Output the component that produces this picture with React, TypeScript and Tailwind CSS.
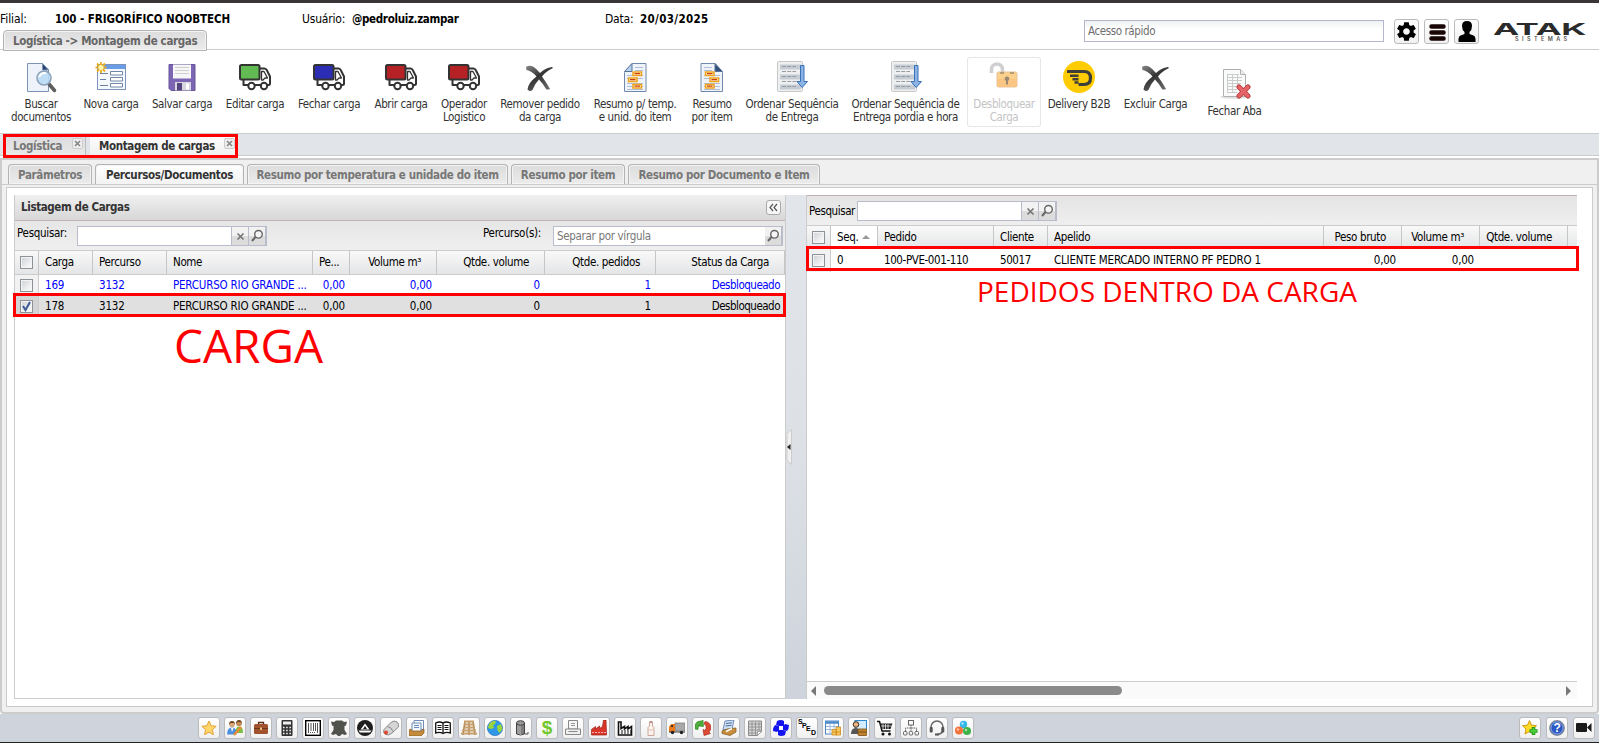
import React from "react";
import { IoMdSettings } from "react-icons/io";

type P = { children?: React.ReactNode };

const Big = ({ children }: P) => (
  <svg width="32" height="32" viewBox="0 0 32 32" className="block shrink-0">
    {children}
  </svg>
);
const Sm = ({ children }: P) => (
  <svg width="16" height="16" viewBox="0 0 16 16" className="block shrink-0">
    {children}
  </svg>
);

const Truck = ({ color }: { color: string }) => (
  <Big>
    <g stroke="#333" strokeWidth="2" strokeLinejoin="round" strokeLinecap="round">
      <path d="M21 7.500h4.500q1.500 0 2.500 2l3 6v7q0 1.500-1.500 1.500H28M22 24h-6M9 24H4.500V19" fill="#fff" />
      <rect x="1" y="4" width="19.500" height="14.500" rx="1.500" fill={color} />
      <path d="M22.500 10.500h2.500l3.500 6.500h-2.500l-2 2h-1.500z" fill="#fff" strokeWidth="1.300" />
      <circle cx="12.500" cy="25" r="3.200" fill="#fff" />
      <circle cx="25" cy="25" r="3.200" fill="#fff" />
    </g>
  </Big>
);
const Cross = () => (
  <Big>
    <defs>
      <linearGradient id="crossInk" x1="0" y1="0" x2="0.600" y2="1">
        <stop offset="0" stopColor="#888" />
        <stop offset="0.500" stopColor="#333" />
        <stop offset="1" stopColor="#666" />
      </linearGradient>
    </defs>
    <path
      d="M2 6Q5 4 9 5.500Q13 8 16 12Q21 7 28 6L29 7Q22 10 18 15.500Q22 21 26 28Q23 29 22 28Q18.500 22 15 18.500Q10.500 23 8.500 29Q5.500 31 3.500 28.500Q4 22 12.500 15.500Q8 10 2.500 9z"
      fill="url(#crossInk)"
    />
  </Big>
);
const Report = ({ flip }: { flip?: boolean }) => (
  <Big>
    <g transform={flip ? "translate(32 0) scale(-1 1)" : undefined}>
      <path d="M5.500 11.500L13 2.500h14v28H5.500z" fill="#eff4fb" stroke="#7089ad" />
      <path d="M5.500 10.500H13v-8z" fill={flip ? "#33517c" : "#b4d1f0"} stroke="#5a7396" />
      <path d="M16 6.500h8M16 9.500h8M8 14.500h16M8 17.500h16M8 22.500h16M8 25.500h16M8 28.500h16" stroke="#b3bed6" />
      <g fill="#fff8dd" stroke="#f0a21a" strokeWidth="1.500">
        <rect x="14" y="11" width="8.500" height="3.500" />
        <rect x="9.500" y="17" width="8.500" height="3.500" />
        <rect x="14" y="23.500" width="8.500" height="3.500" />
      </g>
      <path d="M15.500 12.700h5.500M11 18.700h5.500M15.500 25.200h5.500" stroke="#cc3d12" strokeWidth="1.300" />
    </g>
  </Big>
);
const Order = () => (
  <Big>
    <rect x="1.500" y=".5" width="25" height="30" rx="1" fill="#eeeff0" stroke="#c8c8c8" />
    <path d="M4 6h21M4 16h21M4 26h21" stroke="#c6ccd4" strokeWidth="5" />
    <path d="M6 5.500h14M6 10.500h14M6 15.500h14M6 20.500h14M6 25.500h14" stroke="#989ca3" strokeDasharray="4 1.200" />
    <path d="M24.500 4.500h3.500v16h3.500l-5.300 6-5.300-6h3.600z" fill="#8bb4e4" stroke="#3a70b5" />
  </Big>
);

const tools: { w: string; label: string[]; icon: React.ReactNode; disabled?: boolean; low?: boolean }[] = [
  {
    w: "w-[74px]",
    label: ["Buscar", "documentos"],
    icon: (
      <Big>
        <path d="M2.500 2.500h15l6 6.500v21.500h-21z" fill="#eef3fb" stroke="#7d93b5" />
        <path d="M17.500 2.500v6.500h6z" fill="#26436e" stroke="#7d93b5" />
        <path d="M24 23l5.500 6.500" stroke="#5d5d5d" strokeWidth="3.500" strokeLinecap="round" />
        <circle cx="19" cy="17" r="7" fill="#b9dcf5" fillOpacity="0.900" stroke="#8aa0b8" strokeWidth="1.500" />
        <path d="M14 16q2-4.500 7-4" stroke="#fff" strokeWidth="2" fill="none" />
      </Big>
    ),
  },
  {
    w: "w-[66px]",
    label: ["Nova carga"],
    icon: (
      <Big>
        <rect x="2.500" y="3.500" width="28" height="25" fill="#f5f8fc" stroke="#7b93bb" />
        <rect x="3" y="4" width="27" height="4" fill="#6a9de8" />
        <path d="M5 12.500h8M5 18.500h6M5 24.500h8" stroke="#6c809f" />
        <path d="M15.500 10.500h12v3.500h-12zM15.500 16.500h12v3.500h-12zM15.500 22.500h12v3.500h-12z" fill="#fff" stroke="#7387a8" />
        <path d="M6 1v11M.5 6.500h11M2 2.500l8 8M10 2.500l-8 8" stroke="#e8ae20" strokeWidth="1.800" />
        <circle cx="6" cy="6.500" r="2.500" fill="#fff7b0" />
      </Big>
    ),
  },
  {
    w: "w-[76px]",
    label: ["Salvar carga"],
    icon: (
      <Big>
        <path d="M3 3.500h26v26H5l-2-2z" fill="#7c66b4" stroke="#65539a" />
        <rect x="7" y="3.500" width="18" height="14" fill="#f6f6f6" />
        <path d="M9 6.500h14M9 9.500h14M9 12.500h14" stroke="#cfcfcf" />
        <rect x="9" y="21" width="16" height="8.500" fill="#d7d5de" />
        <rect x="11" y="22" width="5" height="7.500" fill="#55447f" />
        <rect x="20" y="22.500" width="3" height="6" fill="#fff" />
      </Big>
    ),
  },
  { w: "w-[70px]", label: ["Editar carga"], icon: <Truck color="#62bb52" /> },
  { w: "w-[78px]", label: ["Fechar carga"], icon: <Truck color="#2b2eb4" /> },
  { w: "w-[66px]", label: ["Abrir carga"], icon: <Truck color="#b52124" /> },
  { w: "w-[60px]", label: ["Operador", "Logistico"], icon: <Truck color="#b52124" /> },
  { w: "w-[92px]", label: ["Remover pedido", "da carga"], icon: <Cross /> },
  { w: "w-[98px]", label: ["Resumo p/ temp.", "e unid. do item"], icon: <Report /> },
  { w: "w-[56px]", label: ["Resumo", "por item"], icon: <Report flip /> },
  { w: "w-[104px]", label: ["Ordenar Sequência", "de Entrega"], icon: <Order /> },
  { w: "w-[123px]", label: ["Ordenar Sequência de", "Entrega pordia e hora"], icon: <Order /> },
  {
    w: "w-[74px]",
    label: ["Desbloquear", "Carga"],
    disabled: true,
    icon: (
      <Big>
        <path d="M3.500 12V8.500a5.500 5.500 0 0 1 11 0V12" fill="none" stroke="#d0d0d0" strokeWidth="3.500" />
        <rect x="9" y="11" width="20" height="15" rx="1.500" fill="#fbd08b" stroke="#e6c39a" />
        <rect x="9" y="18" width="20" height="8" fill="#fbc080" opacity="0.600" />
        <path d="M19 15.500a2.300 2.300 0 0 1 1 4.400v3.600h-2v-3.600a2.300 2.300 0 0 1 1-4.400z" fill="#9c8973" />
        <path d="M12 12h4M22 12h4" stroke="#a68d6c" strokeWidth="1.500" />
      </Big>
    ),
  },
  {
    w: "w-[76px]",
    label: ["Delivery B2B"],
    icon: (
      <Big>
        <circle cx="16" cy="16" r="16" fill="#ffcc03" />
        <path d="M4 10.500h17q6.500 0 6.500 6.500t-6.500 6.500h-5.500" fill="none" stroke="#3d3d3b" strokeWidth="3.200" />
        <path d="M7 14.800h8.500M9.500 18.300h6M11.500 21.500h4" stroke="#3d3d3b" strokeWidth="2.400" />
      </Big>
    ),
  },
  { w: "w-[77px]", label: ["Excluir Carga"], icon: <Cross /> },
  {
    w: "w-[81px]",
    label: ["Fechar Aba"],
    low: true,
    icon: (
      <Big>
        <ellipse cx="15" cy="29" rx="14" ry="1.800" fill="#e2e2e2" />
        <path d="M4.500 1.500h17l5 5v22h-22z" fill="#fafafa" stroke="#b0b0b0" />
        <path d="M21.500 1.500v5h5" fill="#eee" stroke="#b0b0b0" />
        <path d="M8 6.500h12M8 9.500h15M8 12.500h15M8 15.500h14M8 18.500h12M8 21.500h10M8 24.500h10M8.500 6v19M13.500 6v19M18.500 6v13" stroke="#c9cdc9" />
        <path d="M20 19l9 9M29 19l-9 9" stroke="#b9383c" strokeWidth="5" strokeLinecap="round" />
        <path d="M20 19l9 9M29 19l-9 9" stroke="#e46467" strokeWidth="3.200" strokeLinecap="round" />
      </Big>
    ),
  },
];

const innerTabs = [
  { w: "w-[84px]", t: "Parâmetros" },
  { w: "w-[149px]", t: "Percursos/Documentos", on: true },
  { w: "w-[261px]", t: "Resumo por temperatura e unidade do item" },
  { w: "w-[114px]", t: "Resumo por item" },
  { w: "w-[192px]", t: "Resumo por Documento e Item" },
];

const Check = ({ on }: { on?: boolean }) => (
  <span className="flex size-[13px] items-center justify-center border border-[#8c9297] bg-linear-to-br from-[#cdd1d5] to-white shadow-[inset_0_0_0_1px_#f4f4f4]">
    {on && (
      <svg width="11" height="11" viewBox="0 0 11 11">
        <path d="M2 5l2.500 4L9 1" fill="none" stroke="#3c5a96" strokeWidth="2" />
      </svg>
    )}
  </span>
);
const Lens = () => (
  <svg width="14" height="14" viewBox="0 0 14 14">
    <circle cx="8.500" cy="5.300" r="3.800" fill="#f4f4f4" stroke="#666" strokeWidth="1.400" />
    <path d="M5.500 8L2 12" stroke="#666" strokeWidth="2" />
  </svg>
);
const ClearX = () => (
  <svg width="9" height="9" viewBox="0 0 9 9">
    <path d="M1.500 1.500l6 6M7.500 1.500l-6 6" stroke="#777" strokeWidth="1.700" />
  </svg>
);
const Trigger = ({ children }: P) => (
  <span className="flex h-full w-[17px] items-center justify-center border-r border-[#b9bccb] bg-linear-to-b from-[#f2f2f2] from-50% to-[#dcdcdc] to-50%">
    {children}
  </span>
);

type Col = { w: string; h: string; right?: boolean; sort?: boolean };
const leftCols: Col[] = [
  { w: "w-[54px]", h: "Carga" },
  { w: "w-[74px]", h: "Percurso" },
  { w: "w-[146px]", h: "Nome" },
  { w: "w-[37px]", h: "Pe..." },
  { w: "w-[87px]", h: "Volume m³", right: true },
  { w: "w-[108px]", h: "Qtde. volume", right: true },
  { w: "w-[111px]", h: "Qtde. pedidos", right: true },
  { w: "w-[129px]", h: "Status da Carga", right: true },
];
const leftRows = [
  ["169", "3132", "PERCURSO RIO GRANDE ...", "0,00", "0,00", "0", "1", "Desbloqueado"],
  ["178", "3132", "PERCURSO RIO GRANDE ...", "0,00", "0,00", "0", "1", "Desbloqueado"],
];
const rightCols: Col[] = [
  { w: "w-[47px]", h: "Seq.", sort: true },
  { w: "w-[116px]", h: "Pedido" },
  { w: "w-[54px]", h: "Cliente" },
  { w: "w-[276px]", h: "Apelido" },
  { w: "w-[78px]", h: "Peso bruto", right: true },
  { w: "w-[78px]", h: "Volume m³", right: true },
  { w: "w-[88px]", h: "Qtde. volume", right: true },
];
const rightRow = ["0", "100-PVE-001-110", "50017", "CLIENTE MERCADO INTERNO PF PEDRO 1", "0,00", "0,00", ""];

const HeadCells = ({ cols }: { cols: Col[] }) => (
  <>
    <div className="flex h-full w-[24px] shrink-0 items-center border-r border-[#c6c6c6] pl-[5px]">
      <Check />
    </div>
    {cols.map((c, i) => (
      <div
        key={i}
        className={`${c.w} flex h-full shrink-0 items-center whitespace-nowrap border-r border-[#c6c6c6] pl-1.5 tracking-[-0.350px] ${c.right ? "justify-end pr-[15px]" : ""} ${c.sort ? "bg-white" : ""}`}
      >
        {c.h}
        {c.sort && <span className="ml-1 border-x-4 border-b-4 border-x-transparent border-b-[#999]" />}
      </div>
    ))}
  </>
);

const bottomIcons: React.ReactNode[] = [
  <Sm><path d="M8 1l2.100 4.700 5.100.6-3.800 3.400 1 5L8 12.200l-4.400 2.500 1-5L.8 6.300l5.100-.6z" fill="#ffd569" stroke="#e2a23b" /></Sm>,
  <Sm>
    <circle cx="5" cy="4.500" r="2.800" fill="#d7a777" /><path d="M2 4.500q0-3.500 3-3.500t3 3.500l-1-1.500H3.500z" fill="#6b4220" />
    <circle cx="12" cy="3.500" r="2.800" fill="#c08a55" /><path d="M9 4q0-4 3-4t3 4l-1-2h-3.500z" fill="#6b4220" />
    <path d="M0 14.500q0-7 5-7t4.500 7z" fill="#4d8fdc" /><path d="M4 8l1 4 1.500-4z" fill="#fff" /><path d="M9 13q-1-6 3-6.500t4 6.500z" fill="#7cbf44" /><path d="M7 15l7-8" stroke="#ee8a2c" strokeWidth="2.200" />
  </Sm>,
  <Sm><path d="M5.500 4V2.500h5V4" fill="none" stroke="#5b2a12" strokeWidth="1.300" /><rect x="1" y="4" width="14" height="10" rx="1.500" fill="#a0522c" /><path d="M1 8.500h14" stroke="#6f3415" /><rect x="7" y="7.500" width="2" height="2.500" fill="#e8c27a" /></Sm>,
  <Sm><rect x="2.500" y="0" width="11" height="16" rx="1" fill="#333" /><rect x="4" y="1.500" width="8" height="3" fill="#eee" /><path d="M4 7.500h8M4 10.500h8M4 13.500h8" stroke="#fff" strokeWidth="1.500" strokeDasharray="1.500 1.700" /></Sm>,
  <Sm><rect x=".7" y=".7" width="14.600" height="14.600" fill="#fff" stroke="#000" strokeWidth="1.400" /><path d="M3.500 3v10M6 3v8M8.500 3v8M10.500 3v8M12.500 3v10" stroke="#555" /><path d="M5 12.500h6" stroke="#555" strokeDasharray="1 1" /></Sm>,
  <Sm><path d="M0 1.500l3 .5 2-1.500h6L13 2l3-.5-1 4-1.500.5v4l2.500 4-2 1-3-1-2 2H7l-2-2-3 1-2-1 2.500-4V6L1 5.500z" fill="#4f534c" /></Sm>,
  <Sm><circle cx="8" cy="8" r="8" fill="#1d1d1d" /><path d="M1.500 10.500h13l-1.500 2H3zM8 3.500l4.500 6h-9z" fill="#fff" /><path d="M8 6l2 3H6z" fill="#1d1d1d" /></Sm>,
  <Sm><path d="M1 9.500L8.500 2q3-2 5.500 0t1.500 5L9 13q-3.500 3-6.500 1.500T1 9.500z" fill="#d5d5d5" stroke="#888" /><path d="M4.500 6.500q4 .5 5.500 5" stroke="#888" fill="none" /><circle cx="3" cy="12.500" r="2" fill="#e2452e" /></Sm>,
  <Sm><path d="M5 .5h9.500v9H5z" fill="#fff" stroke="#6d8bb8" /><path d="M3 3h9v9H3z" fill="#f2f6fc" stroke="#6d8bb8" /><path d="M5 5.500h5M5 7.500h5" stroke="#6d8bb8" /><path d="M0 10l2-1 1 2h9l3-2v4l-3 3H0z" fill="#c48b3d" stroke="#87591e" strokeWidth=".7" /></Sm>,
  <Sm><path d="M.7 3q4-2 7.300 0 3.300-2 7.300 0v10q-4-1.500-7.300.5Q4.700 11.500.7 13z" fill="#fff" stroke="#111" strokeWidth="1.300" /><path d="M8 3v10" stroke="#111" strokeWidth="1.300" /><path d="M2.500 5.500h4M2.500 7.500h4M2.500 9.500h4M9.500 5.500h4M9.500 7.500h4M9.500 9.500h4" stroke="#111" /></Sm>,
  <Sm><path d="M4 2L2 15M8 1v14M12 2l2 13" stroke="#8f6a3a" strokeWidth="1.300" /><path d="M3 1.500h10M2.500 4.500h11M2 7.500h12M1 10.500h14M0 13.500h16" stroke="#c9a06a" strokeWidth="1.900" /></Sm>,
  <Sm><circle cx="8" cy="8" r="7.600" fill="#2f97e6" stroke="#1f6cc0" strokeWidth=".7" /><path d="M2 4q4-4 7-3l-1 3-2 1 1 3-3 1-3-1zM10 6l4-2 1.500 5-3 4-2-3z" fill="#9bd63a" /></Sm>,
  <Sm><path d="M3.500 3h8v11h-8z" fill="#7d7d7d" /><path d="M5 3v11M7 3v11" stroke="#b0b0b0" strokeWidth="1.300" /><ellipse cx="7.500" cy="3" rx="4" ry="2.300" fill="#999" stroke="#444" /><path d="M3.500 3v11q4 2 8 0V3" fill="none" stroke="#444" /><path d="M12 14h3v-2" stroke="#555" fill="none" /></Sm>,
  <span className="font-['Liberation_Sans',sans-serif] text-[19px] font-bold leading-4 text-[#72c72b]">$</span>,
  <Sm><path d="M3.500 .5h9v8.500h-9z" fill="#f6f6f6" stroke="#888" /><path d="M6 3.500h4M6 5.500h4" stroke="#999" /><path d="M.5 9h15v5.500H.5z" fill="#eee" stroke="#888" /><path d="M3.500 11.500h9" stroke="#888" /></Sm>,
  <Sm><path d="M.5 15V9.500l4-3v2.500l4-3v2.500l3-2L12.500 0h2.500l.5 15z" fill="#d93629" stroke="#9c1c12" strokeWidth=".7" /><path d="M1 12.500h14" stroke="#fff" strokeDasharray="2 1" opacity=".6" /></Sm>,
  <Sm><path d="M1.500 15V2h2.500v6.500l3.500-2V9L11 6.500V9l3.500-2.500V15z" fill="#fff" stroke="#111" strokeWidth="1.600" /><path d="M4 11h10M4 13h10" stroke="#111" strokeWidth="1.200" strokeDasharray="2 1" /></Sm>,
  <Sm><path d="M6.500 2.500h3V6l1.500 1.500v8H5v-8L6.500 6z" fill="#fbf2ee" stroke="#c9a697" /><path d="M6.500 1h3v2h-3z" fill="#b99384" /><path d="M5.500 10h5" stroke="#e2c1b4" /></Sm>,
  <Sm><rect x="6" y="3" width="10" height="8" fill="#a9a9a9" stroke="#777" strokeWidth=".7" /><path d="M0 7l2-3h4v8H0z" fill="#ee7a19" /><path d="M1.500 7l1-2H4v2z" fill="#333" /><path d="M0 12h16" stroke="#444" /><circle cx="3.500" cy="12.500" r="1.700" fill="#222" /><circle cx="12.500" cy="12.500" r="1.700" fill="#222" /></Sm>,
  <Sm><path d="M0 9Q-1 2 5 1l1.500 0L8 0l.5 6.500L3.500 6 5 4.500Q3 5 3 9.500z" fill="#4fae3d" stroke="#2d7d20" strokeWidth=".6" /><path d="M10 1.500q5 .5 6 5.500 0 3-2 5l1.500 1.500-6.500 2-1-6 2 1q2-2.500 1-4.500T9 4z" fill="#dc4a33" stroke="#a02314" strokeWidth=".6" /></Sm>,
  <Sm><path d="M4 1l9-1-2 9-9 1z" fill="#cfe1f4" stroke="#6d8bb8" /><path d="M5 3.500l6-.7M4.500 6l6-.7" stroke="#4d6d9d" /><path d="M1 11l5-2 9-1v4l-6 3.500-8-2z" fill="#c98f3e" stroke="#7c5117" strokeWidth=".7" /><path d="M5 11.500l6-3" stroke="#fff" strokeWidth="1.500" /></Sm>,
  <Sm><path d="M1.500 1h13v10.500l-4 4h-9z" fill="#d6d6d6" stroke="#888" /><path d="M2 4h12M2 7h12M2 10h12M2 13h9M5 1.500v14M8.500 1.500v14M12 1.500v9" stroke="#949494" /><path d="M14.500 11.500h-4v4z" fill="#fff" stroke="#888" strokeWidth=".7" /></Sm>,
  <Sm><g fill="#1414f0"><path d="M4 1q4-2 7 0v5H6L3 5z" /><path d="M12 4l4 1q0 4-2 6l-4-1V6z" /><path d="M12 15q-4 2-7 0v-5h5l3 1z" /><path d="M4 12l-4-1q0-4 2-6l4 1v4z" /></g><rect x="7" y="7" width="2" height="2" fill="#fff" /></Sm>,
  <span className="relative block size-4 font-['Liberation_Sans',sans-serif] text-[7px] font-bold leading-none text-black">
    <span className="absolute -left-px -top-0.5">S</span><span className="absolute left-[3px] top-0.5">P</span><span className="absolute left-[7px] top-[5px]">E</span><span className="absolute left-3 top-[9px]">D</span>
  </span>,
  <Sm><rect x=".5" y="1" width="13" height="13" fill="#fff" stroke="#4d88c8" /><path d="M.5 2.500h13" stroke="#4d88c8" strokeWidth="2.500" /><path d="M1 6.500h12M1 9.500h8M5 4v9M9 4v5" stroke="#9bbce0" /><path d="M7 9.500h4.500V15H7zM11 7h4.500v8H11z" fill="#f8c95c" stroke="#cd8a1f" strokeWidth=".8" /><path d="M7 12h9" stroke="#cd8a1f" strokeWidth=".8" /></Sm>,
  <Sm><rect x="4" y=".5" width="11.500" height="9" fill="#d4ecff" stroke="#2c89d0" /><circle cx="5" cy="4.500" r="2.800" fill="#e2b184" stroke="#4b2c12" /><path d="M0 14q0-6 5-6t5 6z" fill="#555" /><rect x="7" y="9" width="9" height="6.500" rx="1" fill="#bf8430" stroke="#7b4d10" strokeWidth=".8" /><path d="M7 12h9" stroke="#7b4d10" /></Sm>,
  <Sm><path d="M0 1.500h2.500L5 11h8.500" fill="none" stroke="#111" strokeWidth="1.500" /><path d="M3 3.500h12.500L13.500 9H4.500z" fill="#222" /><path d="M6 4v5M8.500 4v5M11 4v5M4 6h11" stroke="#fff" strokeWidth=".7" /><circle cx="6" cy="14" r="1.500" fill="#111" /><circle cx="12.500" cy="14" r="1.500" fill="#111" /></Sm>,
  <Sm><g fill="none" stroke="#666"><rect x="5.500" y=".5" width="5" height="4.500" /><path d="M8 5v3M2.500 11V8h11v3M8 8v3" strokeDasharray="1.500 .7" /><rect x=".5" y="11.500" width="3.500" height="3.500" rx="1" /><rect x="6.200" y="11.500" width="3.500" height="3.500" rx="1" /><rect x="12" y="11.500" width="3.500" height="3.500" rx="1" /></g></Sm>,
  <Sm><path d="M2 9V7a6 6 0 0 1 12 0v2q0 5-6 5.500" fill="none" stroke="#666" strokeWidth="1.500" /><rect x=".7" y="7" width="3" height="5.500" rx="1" fill="#555" /><rect x="12.300" y="7" width="3" height="5.500" rx="1" fill="#555" /><rect x="6" y="13.500" width="4" height="2" fill="#555" /></Sm>,
  <Sm><circle cx="8.500" cy="4.500" r="3.700" fill="#34b6ea" /><circle cx="4" cy="10.500" r="4" fill="#f4713a" /><circle cx="12" cy="11" r="4" fill="#3cb34a" /><circle cx="7.500" cy="3.500" r="1.200" fill="#a6e3fb" /><circle cx="3" cy="9.500" r="1.200" fill="#ffc4a2" /><circle cx="11" cy="10" r="1.200" fill="#a8e6a6" /></Sm>,
];
const cornerIcons: React.ReactNode[] = [
  <Sm><path d="M7.500 0.500l2 4.700 5 .5-3.700 3.300 1 5-4.300-2.500-4.500 2.500 1-5L.5 5.700l5-.5z" fill="#ffdc26" stroke="#d19a10" /><path d="M11.500 7v8M7.500 11h8" stroke="#239a1c" strokeWidth="3.600" /><path d="M11.500 8v6M8.500 11h6" stroke="#4cd03a" strokeWidth="1.800" /></Sm>,
  <Sm>
    <circle cx="8" cy="8" r="7.300" fill="#2b59c3" stroke="#858b98" strokeWidth="1.300" /><circle cx="8" cy="8" r="6" fill="none" stroke="#b8cbf5" strokeWidth=".6" />
    <text x="8" y="12.200" textAnchor="middle" fontSize="12" fontWeight="700" fill="#fff" fontFamily="Liberation Sans, sans-serif">?</text>
  </Sm>,
  <Sm><rect x="0" y="3" width="11" height="9" rx="1" fill="#1b1b1b" /><path d="M11 7.500L15.500 3v9z" fill="#1b1b1b" /></Sm>,
];
const Dock = ({ children }: P) => (
  <span className="flex size-[22px] shrink-0 items-center justify-center overflow-hidden rounded-[3px] border border-[#bbb] bg-linear-to-b from-white to-[#f0f0f0]">
    {children}
  </span>
);
const HeaderBtn = ({ children }: P) => (
  <span className="flex size-[25px] items-center justify-center rounded-[3px] border border-[#bbb] bg-linear-to-b from-white to-[#f1f1f1]">
    {children}
  </span>
);
const TabClose = () => (
  <span className="mt-[4px] flex size-[11px] items-center justify-center rounded-[2px] border border-[#ccc] bg-[#eee]">
    <svg width="7" height="7" viewBox="0 0 7 7">
      <path d="M1 1l5 5M6 1L1 6" stroke="#888" strokeWidth="1.700" />
    </svg>
  </span>
);

export default function App() {
  return (
    <div className="flex h-[743px] w-[1599px] flex-col overflow-hidden bg-white font-['DejaVu_Sans_Condensed','DejaVu_Sans',sans-serif] text-[11.500px] leading-[13px] tracking-[-0.200px] text-black">
      <div className="h-[3px] shrink-0 bg-[#3a3637]" />

      <header className="flex h-[47px] shrink-0 justify-between border-b border-[#ccc]">
        <div className="flex flex-col">
          <div className="flex h-[27px] shrink-0 items-center pt-[5px] whitespace-nowrap">
            <span className="w-[55px] text-[12px] tracking-[-0.100px]">Filial:</span>
            <b className="w-[247px] tracking-[-0.050px]">100 - FRIGORÍFICO NOOBTECH</b>
            <span className="w-[50px] text-[12px]">Usuário:</span>
            <b className="w-[253px] tracking-[-0.330px]">@pedroluiz.zampar</b>
            <span className="w-[35px] text-[12px]">Data:</span>
            <b className="tracking-[0.350px]">20/03/2025</b>
          </div>
          <div className="ml-[3px] flex h-[21px] w-[204px] shrink-0 items-center rounded-t-[4px] border border-[#b3b3b3] bg-linear-to-b from-[#dcdcdc] to-[#ececec] pl-[9px] pt-px font-bold tracking-[-0.340px] whitespace-nowrap text-[#666] shadow-[inset_0_0_0_1px_#f4f4f4]">
            Logística -&gt; Montagem de cargas
          </div>
        </div>
        <div className="flex items-start pt-4 pr-3">
          <div className="mt-px flex h-[22px] w-[300px] items-center border border-[#b3b6cc] bg-linear-to-b from-[#eef1f2] to-white to-40% pl-[3px] tracking-[-0.400px] text-[#6f6f6f]">
            Acesso rápido
          </div>
          <div className="ml-2.5 flex gap-[5px]">
            <HeaderBtn><IoMdSettings size={23} color="#000" /></HeaderBtn>
            <HeaderBtn>
              <svg width="18" height="19" viewBox="0 0 18 19">
                <path d="M3.500 4.500h12M3.500 10.500h12M3.500 16.500h12" stroke="#1a0505" strokeWidth="4.500" strokeLinecap="round" />
              </svg>
            </HeaderBtn>
            <HeaderBtn>
              <svg width="20" height="23" viewBox="0 0 20 23">
                <path d="M10 1q5 0 5 5 0 4-2.500 6v2l4 1.500Q19 16.500 18.500 22h-17Q1 16.500 3.500 15.500l4-1.500v-2Q5 10 5 6q0-5 5-5z" fill="#000" />
              </svg>
            </HeaderBtn>
          </div>
          <svg className="ml-3.5" width="94" height="25" viewBox="0 0 94 25">
            <text x="0" y="15.500" textLength="93" lengthAdjust="spacingAndGlyphs" fontSize="16.500" fontWeight="700" fill="#2b2b2b" fontFamily="Inter, sans-serif">ATAK</text>
            <text x="22" y="22" textLength="52" fontSize="5.500" fontWeight="600" fill="#555" fontFamily="Inter, sans-serif">SISTEMAS</text>
          </svg>
        </div>
      </header>

      <nav className="flex h-[83px] shrink-0 items-start pl-1 pt-[7px] text-center tracking-[-0.380px] text-[#333]">
        {tools.map((t, i) => (
          <div
            key={i}
            className={`${t.w} flex shrink-0 flex-col items-center whitespace-nowrap ${t.low ? "pt-[11px]" : "pt-[4px]"} ${t.disabled ? "h-[70px] rounded-[3px] text-[#c4c4c4] shadow-[inset_0_0_0_1px_#e6e6e6]" : ""}`}
          >
            {t.icon}
            <div className="mt-[5px]">
              {t.label.map((l) => (
                <div key={l}>{l}</div>
              ))}
            </div>
          </div>
        ))}
      </nav>

      <div className="relative flex h-[23px] shrink-0 items-stretch gap-1 border-y border-[#ccc] bg-[#e1e5ea] pl-[3px] font-bold tracking-[-0.360px]">
        <div className="flex w-[83px] justify-between border-r border-[#bbb] bg-linear-to-b from-[#dcdcdc] to-[#e8e8e8] pl-2.5 pr-[2px] text-[#777]">
          <span className="pt-1.5">Logística</span>
          <TabClose />
        </div>
        <div className="flex w-[148px] justify-between bg-linear-to-b from-white to-[#f0f0f0] pl-[9px] pr-[3px] text-[#333]">
          <span className="pt-1.5">Montagem de cargas</span>
          <TabClose />
        </div>
        <div className="absolute left-[3px] top-0 z-10 h-6 w-[235px] border-[3px] border-[#f00]" />
      </div>

      <div className="mt-[2px] flex h-[556px] shrink-0 flex-col rounded-b-[4px] border-2 border-[#ccc] bg-[#f0f0f0]">
        <div className="flex h-[25px] shrink-0 items-end gap-[3px] border-b border-[#ccc] pl-1.5 pt-1 font-bold tracking-[-0.350px]">
          {innerTabs.map((t) => (
            <div
              key={t.t}
              className={`${t.w} flex h-5 shrink-0 items-center justify-center whitespace-nowrap rounded-t-[4px] border border-b-0 border-[#b3b3b3] pt-px shadow-[inset_0_0_0_1px_#f4f4f4] ${t.on ? "bg-linear-to-b from-white to-[#f2f2f2] text-[#333]" : "bg-linear-to-b from-[#dcdcdc] to-[#ececec] text-[#777]"}`}
            >
              {t.t}
            </div>
          ))}
        </div>

        <div className="mx-1 mt-[2px] flex h-[520px] shrink-0 border border-[#ccc] bg-white pl-[7px] pt-[7px]">
          <section className="flex h-[504px] w-[772px] shrink-0 flex-col border-x border-b border-[#ccc]">
            <div className="flex h-[26px] shrink-0 items-center justify-between border-b border-[#bfb3b3] bg-linear-to-b from-[#f0f0f0] to-[#d7d7d7] pl-1.5 pr-1 font-bold tracking-[-0.380px] text-[#333]">
              Listagem de Cargas
              <span className="flex size-[15px] items-center justify-center rounded-[3px] border border-[#aaa] bg-[#f6f6f6]">
                <svg width="9" height="9" viewBox="0 0 9 9">
                  <path d="M4 1L1 4.500 4 8M8 1L5 4.500 8 8" fill="none" stroke="#555" strokeWidth="1.200" />
                </svg>
              </span>
            </div>
            <div className="flex h-[29px] shrink-0 items-start bg-linear-to-b from-[#e6e6e6] to-[#efefef] pl-[2px] tracking-[-0.280px]">
              <span className="w-[60px] pt-[6px]">Pesquisar:</span>
              <div className="mt-[5px] flex h-5 w-[190px] justify-end border border-[#b9bccb] bg-white">
                <span className="flex border-l border-[#b9bccb]">
                  <Trigger><ClearX /></Trigger>
                  <Trigger><Lens /></Trigger>
                </span>
              </div>
              <span className="ml-[216px] w-[70px] pt-[6px]">Percurso(s):</span>
              <div className="mt-[5px] flex h-5 w-[230px] justify-between border border-[#b9bccb] bg-white">
                <span className="pl-[3px] pt-[3px] tracking-[-0.320px] text-[#777]">Separar por vírgula</span>
                <Trigger><Lens /></Trigger>
              </div>
            </div>
            <div className="flex h-[25px] shrink-0 border-y border-[#ccc] bg-linear-to-b from-[#f9f9f9] to-[#e4e5e7]">
              <HeadCells cols={leftCols} />
            </div>
            <div className="relative">
              {leftRows.map((r, ri) => (
                <div key={ri} className={`flex h-[21px] items-center ${ri ? "bg-[#e0e0e0]" : "text-[#00f]"}`}>
                  <div className={`flex h-full w-[24px] shrink-0 items-center border-r border-[#ccc] pl-[5px] ${ri ? "bg-[#d4d4d4]" : "bg-[#f2f2f2]"}`}>
                    <Check on={ri === 1} />
                  </div>
                  {r.map((v, i) => (
                    <div key={i} className={`${leftCols[i].w} shrink-0 whitespace-nowrap pl-1.5 pr-[5px] ${i > 2 ? "text-right" : ""} ${i === 7 ? "tracking-[-0.500px]" : ""}`}>
                      {v}
                    </div>
                  ))}
                </div>
              ))}
              <div className="absolute -left-[2px] top-[18px] h-6 w-[773px] border-[3px] border-[#f00]" />
              <div className="absolute left-[159px] top-[42px] font-['Open_Sans',sans-serif] text-[46px] leading-[56px] tracking-[0px] text-[#f00]">
                CARGA
              </div>
            </div>
          </section>

          <div className="flex h-[504px] w-5 shrink-0 items-center bg-linear-to-b from-[#e2e6eb] via-[#dde1e6] to-[#ced3dc]">
            <svg width="6" height="36" viewBox="0 0 6 36">
              <path d="M1 4.500L5.500 .5v35L1 31.500z" fill="#f0f0f0" stroke="#ccc" />
              <path d="M4.500 15v6L1 18z" fill="#222" />
            </svg>
          </div>

          <section className="flex h-[504px] w-[771px] shrink-0 flex-col border-l border-[#ccc]">
            <div className="flex h-[30px] shrink-0 items-start border-t border-[#bfb3b3] bg-linear-to-b from-[#e4e4e4] to-[#efefef] pl-[2px] tracking-[-0.400px]">
              <span className="w-[48px] pt-[9px]">Pesquisar</span>
              <div className="mt-[5px] flex h-5 w-[200px] justify-end border border-[#b9bccb] bg-white">
                <span className="flex border-l border-[#b9bccb]">
                  <Trigger><ClearX /></Trigger>
                  <Trigger><Lens /></Trigger>
                </span>
              </div>
            </div>
            <div className="flex h-[24px] shrink-0 border-y border-[#ccc] bg-linear-to-b from-[#f9f9f9] to-[#e4e5e7]">
              <HeadCells cols={rightCols} />
            </div>
            <div className="relative flex-1">
              <div className="flex h-[23px] items-center">
                <div className="flex h-full w-[24px] shrink-0 items-center border-r border-[#ccc] bg-[#f2f2f2] pl-[5px]">
                  <Check />
                </div>
                {rightRow.map((v, i) => (
                  <div key={i} className={`${rightCols[i].w} shrink-0 whitespace-nowrap pl-1.5 pr-[6px] ${i > 3 ? "text-right" : ""} ${i === 1 || i === 2 ? "tracking-[-0.400px]" : ""}`}>
                    {v}
                  </div>
                ))}
              </div>
              <div className="absolute -left-px -top-[3px] h-[25px] w-[773px] border-[3px] border-[#f00]" />
              <div className="absolute left-[170px] top-[24px] whitespace-nowrap font-['Open_Sans',sans-serif] text-[28px] leading-[36px] tracking-[0px] text-[#f00]">
                PEDIDOS DENTRO DA CARGA
              </div>
            </div>
            <div className="flex h-[18px] shrink-0 items-center border-t border-[#ccc] bg-[#fafafa] pl-1 pr-1.5">
              <span className="border-y-[5px] border-r-[5px] border-y-transparent border-r-[#777]" />
              <span className="ml-2 h-[9px] w-[298px] rounded-full bg-[#8a8a8a]" />
              <span className="ml-auto border-y-[5px] border-l-[5px] border-y-transparent border-l-[#777]" />
            </div>
          </section>
        </div>
      </div>

      <footer className="flex flex-1 items-start border-b border-[#222] bg-[#ced3dc] pl-[198px] pr-1">
        <div className="flex gap-1 pt-[3px]">
          {bottomIcons.map((n, i) => (
            <Dock key={i}>{n}</Dock>
          ))}
        </div>
        <div className="ml-auto flex gap-[5px] pt-[3px]">
          {cornerIcons.map((n, i) => (
            <Dock key={i}>{n}</Dock>
          ))}
        </div>
      </footer>
    </div>
  );
}
